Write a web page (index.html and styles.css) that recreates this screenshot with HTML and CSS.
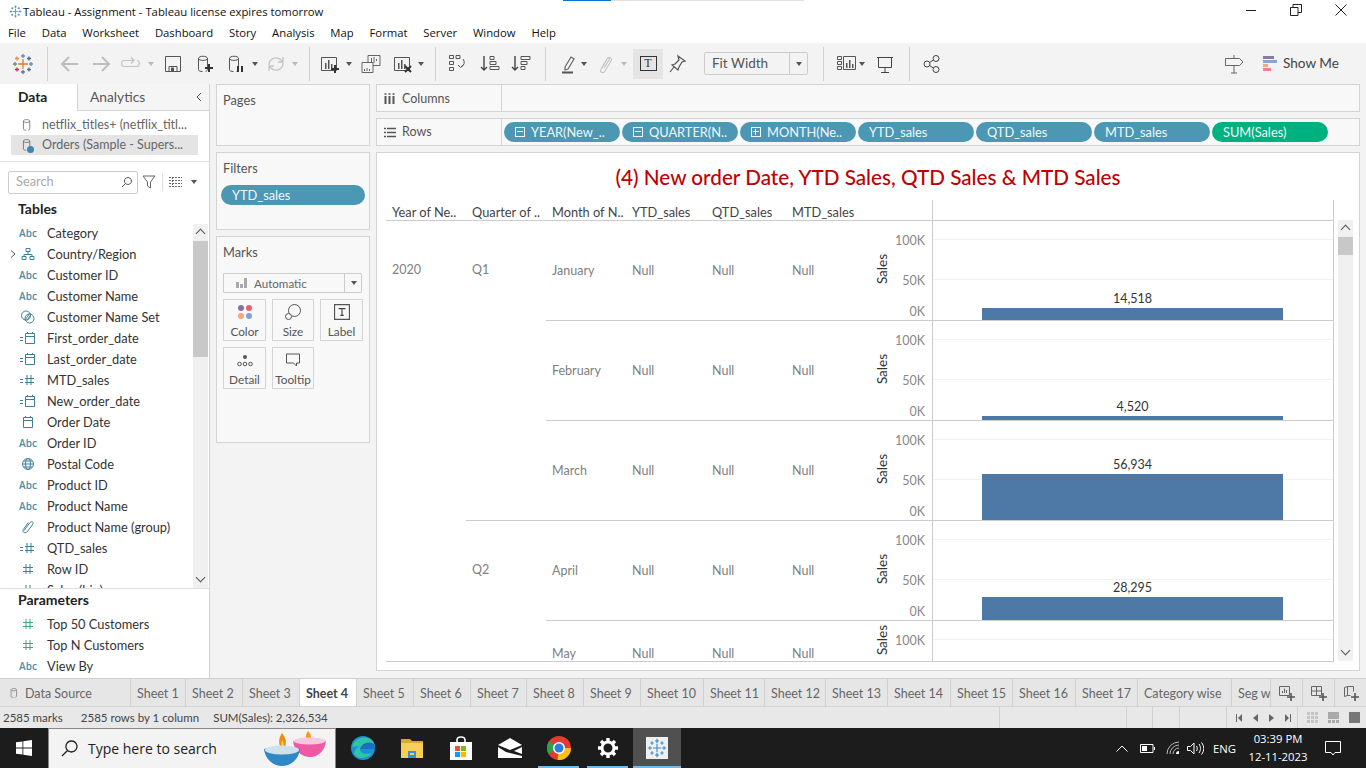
FILE: index.html
```html
<!DOCTYPE html>
<html lang="en">
<head>
<meta charset="utf-8">
<title>Tableau - Assignment</title>
<link rel="stylesheet" href="styles.css">
</head>
<body>
<svg class="defs" width="0" height="0" aria-hidden="true">
  <symbol id="flake" viewBox="0 0 24 24">
    <g fill="none" stroke="currentColor" stroke-width="1.4">
      <path d="M12 7v10M7 12h10"/>
      <path d="M12 1v5M9.800 3.500h4.400M12 18v5M9.800 20.500h4.400M1 12h5M3.500 9.800v4.400M18 12h5M20.500 9.800v4.400"/>
      <path d="M6 4v4M4 6h4M18 4v4M16 6h4M6 16v4M4 18h4M18 16v4M16 18h4"/>
    </g>
  </symbol>
  <symbol id="i-cal" viewBox="0 0 20 16"><path d="M5.500 3.500h9v10h-9zM5.500 6.500h9M7.500 2v2M12.500 2v2" fill="none" stroke="currentColor"/></symbol>
  <symbol id="i-ccal" viewBox="0 0 20 16"><path d="M2 7.500h3M2 10.500h3M7.500 3.500h9v10h-9zM7.500 6.500h9M9.500 2v2M14.500 2v2" fill="none" stroke="currentColor"/></symbol>
  <symbol id="i-num" viewBox="0 0 20 16"><path d="M8 3v10M12 3v10M5 6.500h10M5 10.500h10" fill="none" stroke="currentColor"/></symbol>
  <symbol id="i-cnum" viewBox="0 0 20 16"><path d="M2 7.500h3M2 10.500h3M9 3v10M13 3v10M7 6.500h9M7 10.500h9" fill="none" stroke="currentColor"/></symbol>
  <symbol id="i-geo" viewBox="0 0 20 16"><g fill="none" stroke="currentColor"><circle cx="10" cy="8" r="5.500"/><ellipse cx="10" cy="8" rx="2.500" ry="5.500"/><path d="M4.500 8h11M5.500 5h9M5.500 11h9"/></g></symbol>
  <symbol id="i-hier" viewBox="0 0 20 16"><path d="M8 2.500h4v3h-4zM4 10.500h4v3h-4zM12 10.500h4v3h-4zM10 5.500v3M6 10.500v-2h8v2" fill="none" stroke="currentColor"/></symbol>
  <symbol id="i-set" viewBox="0 0 20 16"><g fill="none" stroke="currentColor"><circle cx="8" cy="6.500" r="4.500"/><circle cx="11.500" cy="9.500" r="4.500"/><path d="M7 11l5-7M9 11.500l4-6"/></g></symbol>
  <symbol id="i-clip" viewBox="0 0 20 16"><path d="M6 11.500l6-8c1.500-1.800 4-.3 2.800 1.700l-5.500 7.500c-2 2.300-5.500.5-4-2.200l5-7" fill="none" stroke="currentColor"/></symbol>
  <symbol id="i-cyl" viewBox="0 0 20 20"><path d="M3.500 4.500c0-3 9-3 9 0v11c0 1-1 1.500-2 1.800M3.500 4.500c0 2.500 9 2.500 9 0M3.500 4.500v11c0 1.500 2 2 4 2" fill="none" stroke="currentColor"/></symbol>
  <symbol id="i-bars" viewBox="0 0 20 20"><path d="M1.500 3.500h15v13h-15z" fill="none" stroke="currentColor"/><path d="M5 9h1.500v6H5zM8 6h1.500v9H8zM11 10h1.500v5H11z" fill="currentColor"/></symbol>
</svg>

<header class="titlebar">
  <svg class="title-logo"><use href="#flake"/></svg>
  <span class="title-text">Tableau - Assignment - Tableau license expires tomorrow</span>
  <div class="progress"><span class="progress-on"></span><span class="progress-off"></span></div>
  <div class="winctl">
    <svg width="12" height="12" viewBox="0 0 12 12"><path d="M1 6.500h10" stroke="#222"/></svg>
    <svg width="12" height="12" viewBox="0 0 12 12"><path d="M.5 3.500h7.500v8H.5zM3 3.500V.5h8.500v8H8" fill="none" stroke="#222"/></svg>
    <svg width="12" height="12" viewBox="0 0 12 12"><path d="M.5.500l11 11M11.500.500l-11 11" stroke="#222"/></svg>
  </div>
</header>

<nav class="menubar">
  <span>File</span><span>Data</span><span>Worksheet</span><span>Dashboard</span><span>Story</span><span>Analysis</span><span>Map</span><span>Format</span><span>Server</span><span>Window</span><span>Help</span>
</nav>

<div class="toolbar">
  <svg class="ti" viewBox="0 0 20 20"><g fill="none" stroke-width="1.300"><path d="M10 5v10M5 10h10" stroke="#e8762c"/><path d="M10 0v4M8 2h4" stroke="#5a8fbf"/><path d="M10 16v4M8 18h4" stroke="#4e79a7"/><path d="M0 10h4M2 8v4" stroke="#59a14f"/><path d="M16 10h4M18 8v4" stroke="#5a8fbf"/><path d="M4 2.500v4M2 4.500h4" stroke="#f28e2b"/><path d="M16 2.500v4M14 4.500h4" stroke="#4e5f8c"/><path d="M4 13.500v4M2 15.500h4" stroke="#c8304a"/><path d="M16 13.500v4M14 15.500h4" stroke="#5b6c9a"/></g></svg>
  <span class="tsep"></span>
  <svg class="ti" viewBox="0 0 20 20"><path d="M18 10H3M9 3l-7 7 7 7" fill="none" stroke="#bdbdbd" stroke-width="2"/></svg>
  <svg class="ti" viewBox="0 0 20 20"><path d="M2 10h15M11 3l7 7-7 7" fill="none" stroke="#bdbdbd" stroke-width="2"/></svg>
  <svg class="ti" viewBox="0 0 20 20"><path d="M12 6.500H3c-3 0-3 6 0 6h13c3 0 3-6 0-6M10 3.500l3 3-3 3" fill="none" stroke="#c4c4c4" stroke-width="1.200"/></svg>
  <span class="caret caret-off"></span>
  <svg class="ti" viewBox="0 0 20 20"><path d="M2.500 2.500h15v15h-15zM6 17.500v-5h8v5" fill="none" stroke="#555"/><path d="M8 13.500h3v4H8z" fill="#555"/></svg>
  <svg class="ti tink" viewBox="0 0 20 20"><use href="#i-cyl"/><path d="M14 10v8M10 14h8" stroke="#333" stroke-width="2"/></svg>
  <svg class="ti tink" viewBox="0 0 20 20"><use href="#i-cyl"/><path d="M12 12v6M16 12v6" stroke="#333" stroke-width="2"/></svg>
  <span class="caret"></span>
  <svg class="ti" viewBox="0 0 20 20"><path d="M3 11a7 7 0 0 1 12-5l2 2M17 9a7 7 0 0 1-12 5l-2-2M17 3v5h-5M3 17v-5h5" fill="none" stroke="#c4c4c4" stroke-width="1.300"/></svg>
  <span class="caret caret-off"></span>
  <span class="tsep"></span>
  <svg class="ti tink" viewBox="0 0 20 20"><use href="#i-bars"/><path d="M15 11v8M11 15h8" stroke="#333" stroke-width="2"/></svg>
  <span class="caret"></span>
  <svg class="ti" viewBox="0 0 20 20"><path d="M7 10V1.500h12v10h-7" fill="none" stroke="#666"/><path d="M1 8.500h11v10H1z" fill="#f3f3f3" stroke="#666"/><path d="M10.500 8V4M13 9V3M15.500 7V5M3.500 17v-2M6 17v-3M8.500 17v-2" stroke="#666"/></svg>
  <svg class="ti tink" viewBox="0 0 20 20"><use href="#i-bars"/><path d="M12 12l6 6M18 12l-6 6" stroke="#333" stroke-width="2"/></svg>
  <span class="caret"></span>
  <span class="tsep"></span>
  <svg class="ti" viewBox="0 0 20 20"><path d="M1.500 1.500h4v3h-4zM8 1.500h4v3H8zM1.500 7.500h4v3h-4zM1.500 13.500h4v3h-4zM15 5a5 5 0 0 1-2 8M10 11l2.500 2.500L15 11" fill="none" stroke="#555"/></svg>
  <svg class="ti" viewBox="0 0 20 20"><path d="M4 2v14M1 13l3 3 3-3" fill="none" stroke="#444" stroke-width="1.400"/><path d="M10 2.500h4v3h-4zM10 7.500h6v3h-6zM10 12.500h9v3h-9z" fill="none" stroke="#555"/></svg>
  <svg class="ti" viewBox="0 0 20 20"><path d="M4 2v14M1 13l3 3 3-3" fill="none" stroke="#444" stroke-width="1.400"/><path d="M10 2.500h9v3h-9zM10 7.500h6v3h-6zM10 12.500h4v3h-4z" fill="none" stroke="#555"/></svg>
  <span class="tsep"></span>
  <svg class="ti" viewBox="0 0 20 20"><path d="M7 13l6-10 3 2-6 10-3 1zM4 18.500h11" fill="none" stroke="#666" stroke-width="1.200"/><path d="M4 18.500h11" stroke="#555" stroke-width="2"/></svg>
  <span class="caret"></span>
  <svg class="ti" viewBox="0 0 20 20"><path d="M7 14l5-9c1.500-3 6-1 4 2l-6 10c-2 3-6 1-4-2l6-10c1-2 3-1 2 1l-5 8" fill="none" stroke="#c4c4c4" stroke-width="1.200"/></svg>
  <span class="caret caret-off"></span>
  <span class="tbtn-on"><span class="tbox">T</span></span>
  <svg class="ti" viewBox="0 0 20 20"><path d="M11 2l7 5-3 1-3 5-1 3-6-5 3-1 4-4zM7 13l-4 5" fill="none" stroke="#555" stroke-width="1.200"/></svg>
  <div class="fitbox"><span class="fit-label">Fit Width</span><span class="fit-arrow"><span class="caret"></span></span></div>
  <span class="tsep"></span>
  <svg class="ti" viewBox="0 0 20 20"><path d="M1.500 2.500h4v3h-4zM1.500 7.500h4v3h-4zM1.500 12.500h4v3h-4zM7.500 2.500h12v13h-12z" fill="none" stroke="#555"/><path d="M10 9h1.500v5H10zM13 6h1.500v8H13zM16 10h1.500v4H16z" fill="#555"/></svg>
  <span class="caret"></span>
  <svg class="ti" viewBox="0 0 20 20"><path d="M2 3.500h16M3.500 3.500v10h13v-10M10 13.500v5M6 18.500h8" fill="none" stroke="#444"/></svg>
  <span class="tsep"></span>
  <svg class="ti" viewBox="0 0 20 20"><g fill="none" stroke="#444"><circle cx="14" cy="4.500" r="3"/><circle cx="5" cy="10" r="3"/><circle cx="14" cy="15.500" r="3"/><path d="M7.500 8.500l4-2.500M7.500 11.500l4 2.500"/></g></svg>
  <svg class="ti ti-sign" viewBox="0 0 20 20"><path d="M1.500 4.500h14l3.500 3.500-3.500 3.500h-14zM10 4.500V1M10 11.500V19M7 19h6" fill="none" stroke="#666"/></svg>
  <div class="showme">
    <span class="sm-bars"><i class="sm1"></i><i class="sm2"></i><i class="sm3"></i><i class="sm4"></i></span>
    <span class="sm-text">Show Me</span>
  </div>
</div>

<main class="workspace">
  <aside class="datapane">
    <div class="dtabs">
      <div class="dtab dtab-on"><span>Data</span></div>
      <div class="dtab dtab-off"><span>Analytics</span><svg class="collapse" width="8" height="10" viewBox="0 0 8 10"><path d="M6 1L2 5l4 4" fill="none" stroke="#555"/></svg></div>
    </div>
    <div class="conns">
      <div class="conn"><svg class="conn-i"><use href="#i-cyl"/></svg><span class="conn-t">netflix_titles+ (netflix_titl...</span></div>
      <div class="conn conn-on"><span class="conn-ic"><svg class="conn-i"><use href="#i-cyl"/></svg><i class="conn-check"></i></span><span class="conn-t">Orders (Sample - Supers...</span></div>
    </div>
    <div class="searchrow">
      <div class="search"><span class="search-t">Search</span><svg width="12" height="12" viewBox="0 0 12 12"><path d="M7 1.500a3.500 3.500 0 1 1-.1 0zM4.500 7.500L1 11" fill="none" stroke="#555"/></svg></div>
      <svg width="14" height="14" viewBox="0 0 14 14" class="funnel"><path d="M1 1h12L8.500 7v6l-3-2V7z" fill="none" stroke="#666"/></svg>
      <span class="sr-sep"></span>
      <svg width="13" height="10" viewBox="0 0 13 10"><path d="M0 .500h13M0 3.500h13M0 6.500h13M0 9.500h13M3.500 0v10" stroke="#666" stroke-dasharray="2 1"/></svg>
      <span class="caret sr-caret"></span>
    </div>
    <h2 class="ph">Tables</h2>
    <div class="fieldbox">
      <ul class="fields fields-main">
        <li><i class="chev"></i><span class="abc">Abc</span><span>Category</span></li>
        <li><svg class="chev-i" width="10" height="10" viewBox="0 0 10 10"><path d="M3 1.500L7 5 3 8.500" fill="none" stroke="#555"/></svg><svg class="fi"><use href="#i-hier"/></svg><span>Country/Region</span></li>
        <li><i class="chev"></i><span class="abc">Abc</span><span>Customer ID</span></li>
        <li><i class="chev"></i><span class="abc">Abc</span><span>Customer Name</span></li>
        <li><i class="chev"></i><svg class="fi"><use href="#i-set"/></svg><span>Customer Name Set</span></li>
        <li><i class="chev"></i><svg class="fi"><use href="#i-ccal"/></svg><span>First_order_date</span></li>
        <li><i class="chev"></i><svg class="fi"><use href="#i-ccal"/></svg><span>Last_order_date</span></li>
        <li><i class="chev"></i><svg class="fi"><use href="#i-cnum"/></svg><span>MTD_sales</span></li>
        <li><i class="chev"></i><svg class="fi"><use href="#i-ccal"/></svg><span>New_order_date</span></li>
        <li><i class="chev"></i><svg class="fi"><use href="#i-cal"/></svg><span>Order Date</span></li>
        <li><i class="chev"></i><span class="abc">Abc</span><span>Order ID</span></li>
        <li><i class="chev"></i><svg class="fi"><use href="#i-geo"/></svg><span>Postal Code</span></li>
        <li><i class="chev"></i><span class="abc">Abc</span><span>Product ID</span></li>
        <li><i class="chev"></i><span class="abc">Abc</span><span>Product Name</span></li>
        <li><i class="chev"></i><svg class="fi"><use href="#i-clip"/></svg><span>Product Name (group)</span></li>
        <li><i class="chev"></i><svg class="fi"><use href="#i-cnum"/></svg><span>QTD_sales</span></li>
        <li><i class="chev"></i><svg class="fi"><use href="#i-num"/></svg><span>Row ID</span></li>
        <li><i class="chev"></i><svg class="fi"><use href="#i-num"/></svg><span>Sales (bin)</span></li>
      </ul>
      <div class="lscroll">
        <span class="sb-up"></span><span class="lthumb"></span><span class="sb-fill"></span><span class="sb-down"></span>
      </div>
    </div>
    <h2 class="ph ph-params">Parameters</h2>
    <ul class="fields">
      <li><i class="chev"></i><svg class="fi fi-green"><use href="#i-num"/></svg><span>Top 50 Customers</span></li>
      <li><i class="chev"></i><svg class="fi fi-green"><use href="#i-num"/></svg><span>Top N Customers</span></li>
      <li><i class="chev"></i><span class="abc">Abc</span><span>View By</span></li>
    </ul>
  </aside>

  <section class="cards">
    <div class="card card-pages"><div class="card-h">Pages</div></div>
    <div class="card card-filters">
      <div class="card-h">Filters</div>
      <div class="pill pill-filter"><span>YTD_sales</span></div>
    </div>
    <div class="card card-marks">
      <div class="card-h">Marks</div>
      <div class="markdd">
        <span class="md-l"><svg width="11" height="10" viewBox="0 0 11 10"><path d="M0 4h3v6H0zM4 6h3v4H4zM8 0h3v10H8z" fill="#aaa"/></svg>Automatic</span>
        <span class="md-a"><span class="caret"></span></span>
      </div>
      <div class="markgrid">
        <div class="mbtn">
          <svg width="16" height="16" viewBox="0 0 16 16"><circle cx="4" cy="4" r="3" fill="#8a70a0"/><circle cx="12" cy="4" r="3" fill="#f0596e"/><circle cx="4" cy="12" r="3" fill="#f3a77b"/><circle cx="12" cy="12" r="3" fill="#7fa3d1"/></svg>
          <span>Color</span>
        </div>
        <div class="mbtn">
          <svg width="16" height="16" viewBox="0 0 16 16"><circle cx="9.500" cy="6.500" r="6" fill="none" stroke="#555"/><circle cx="3.500" cy="12.500" r="3" fill="#f8f8f8" stroke="#555"/></svg>
          <span>Size</span>
        </div>
        <div class="mbtn">
          <svg width="16" height="16" viewBox="0 0 14 14"><path d="M.5.500h13v13H.500z" fill="none" stroke="#555"/><path d="M4 4h6M7 4v6M5.500 10h3" stroke="#444"/></svg>
          <span>Label</span>
        </div>
        <div class="mbtn">
          <svg width="16" height="16" viewBox="0 0 16 16"><circle cx="8" cy="5" r="2" fill="#555"/><g fill="none" stroke="#555"><circle cx="2.500" cy="12" r="1.800"/><circle cx="8" cy="12" r="1.800"/><circle cx="13.500" cy="12" r="1.800"/></g></svg>
          <span>Detail</span>
        </div>
        <div class="mbtn">
          <svg width="16" height="16" viewBox="0 0 16 16"><path d="M1.500 2h13v9h-3v3l-3-3h-7z" fill="none" stroke="#555"/></svg>
          <span>Tooltip</span>
        </div>
      </div>
    </div>
  </section>

  <section class="stage">
    <div class="shelf">
      <div class="shelf-l"><svg width="11" height="11" viewBox="0 0 11 11"><path d="M1.500 3v8M5.500 3v8M9.500 3v8" stroke="#555" stroke-width="2"/><path d="M.5 1h2M4.500 1h2M8.500 1h2" stroke="#555" stroke-width="1.500"/></svg><span>Columns</span></div>
      <div class="shelf-b"></div>
    </div>
    <div class="shelf">
      <div class="shelf-l"><svg width="12" height="11" viewBox="0 0 12 11"><path d="M0 1.500h2M3 1.500h9M0 5.500h2M3 5.500h9M0 9.500h2M3 9.500h9" stroke="#555" stroke-width="1.500"/></svg><span class="rows-t">Rows</span></div>
      <div class="shelf-b shelf-pills">
        <div class="pill"><span class="pm pm-minus"></span><span>YEAR(New_..</span></div>
        <div class="pill"><span class="pm pm-minus"></span><span>QUARTER(N..</span></div>
        <div class="pill"><span class="pm pm-plus"></span><span>MONTH(Ne..</span></div>
        <div class="pill"><span>YTD_sales</span></div>
        <div class="pill"><span>QTD_sales</span></div>
        <div class="pill"><span>MTD_sales</span></div>
        <div class="pill pill-green"><span>SUM(Sales)</span></div>
      </div>
    </div>

    <div class="viz">
      <h1 class="viz-title">(4) New order Date, YTD Sales, QTD Sales &amp; MTD Sales</h1>
      <div class="viz-main">
        <div class="crosstab">
          <div class="xhead">
            <span class="xc">Year of Ne..</span><span class="xc">Quarter of ..</span><span class="xc">Month of N..</span><span class="xc">YTD_sales</span><span class="xc">QTD_sales</span><span class="xc">MTD_sales</span><span class="xaxis"></span><span class="xpane"></span>
          </div>
          <div class="xbody">
            <div class="xv xv-year">2020</div>
            <div class="quarters">
              <div class="quarter">
                <div class="xv">Q1</div>
                <div class="months">
                  <div class="month">
                    <div class="xm">January</div><div class="xm">Null</div><div class="xm">Null</div><div class="xm">Null</div>
                    <div class="axis"><span class="sales">Sales</span><div class="ticks"><span class="t100">100K</span><span class="t50">50K</span><span class="t0">0K</span></div></div>
                    <div class="pane"><span class="bar-l">14,518</span><div class="bar" style="height:12px"></div></div>
                  </div>
                  <div class="month">
                    <div class="xm">February</div><div class="xm">Null</div><div class="xm">Null</div><div class="xm">Null</div>
                    <div class="axis"><span class="sales">Sales</span><div class="ticks"><span class="t100">100K</span><span class="t50">50K</span><span class="t0">0K</span></div></div>
                    <div class="pane"><span class="bar-l">4,520</span><div class="bar" style="height:4px"></div></div>
                  </div>
                  <div class="month">
                    <div class="xm">March</div><div class="xm">Null</div><div class="xm">Null</div><div class="xm">Null</div>
                    <div class="axis"><span class="sales">Sales</span><div class="ticks"><span class="t100">100K</span><span class="t50">50K</span><span class="t0">0K</span></div></div>
                    <div class="pane"><span class="bar-l">56,934</span><div class="bar" style="height:46px"></div></div>
                  </div>
                </div>
              </div>
              <div class="quarter">
                <div class="xv">Q2</div>
                <div class="months">
                  <div class="month">
                    <div class="xm">April</div><div class="xm">Null</div><div class="xm">Null</div><div class="xm">Null</div>
                    <div class="axis"><span class="sales">Sales</span><div class="ticks"><span class="t100">100K</span><span class="t50">50K</span><span class="t0">0K</span></div></div>
                    <div class="pane"><span class="bar-l">28,295</span><div class="bar" style="height:23px"></div></div>
                  </div>
                  <div class="month month-cut">
                    <div class="xm">May</div><div class="xm">Null</div><div class="xm">Null</div><div class="xm">Null</div>
                    <div class="axis"><span class="sales">Sales</span><div class="ticks"><span class="t100">100K</span></div></div>
                    <div class="pane"></div>
                  </div>
                </div>
              </div>
            </div>
          </div>
        </div>
        <div class="vscroll">
          <span class="sb-up"></span><span class="vthumb"></span><span class="sb-fill"></span><span class="sb-down"></span>
        </div>
      </div>
    </div>
  </section>
</main>

<div class="tabstrip">
  <div class="tabs">
    <div class="tab tab-ds"><svg width="12" height="14" viewBox="0 0 20 20"><use href="#i-cyl"/></svg>Data Source</div>
    <div class="tab">Sheet 1</div><div class="tab">Sheet 2</div><div class="tab">Sheet 3</div><div class="tab tab-on">Sheet 4</div><div class="tab">Sheet 5</div><div class="tab">Sheet 6</div><div class="tab">Sheet 7</div><div class="tab">Sheet 8</div><div class="tab">Sheet 9</div><div class="tab">Sheet 10</div><div class="tab">Sheet 11</div><div class="tab">Sheet 12</div><div class="tab">Sheet 13</div><div class="tab">Sheet 14</div><div class="tab">Sheet 15</div><div class="tab">Sheet 16</div><div class="tab">Sheet 17</div><div class="tab">Category wise</div><div class="tab tab-last">Seg wise</div>
  </div>
  <div class="newtabs">
    <div class="newtab"><svg width="16" height="16" viewBox="0 0 16 16"><path d="M.5 1.500h10v9H.5z" fill="none" stroke="#666"/><path d="M3.500 8V6M5.500 8V3.500M7.500 8V5" stroke="#666"/><path d="M12 8v8M8 12h8" stroke="#555" stroke-width="1.600"/></svg></div>
    <div class="newtab"><svg width="16" height="16" viewBox="0 0 16 16"><path d="M.5 1.500h10v9H.5zM.5 6h10M5.500 1.500V10.500" fill="none" stroke="#666"/><path d="M12 8v8M8 12h8" stroke="#555" stroke-width="1.600"/></svg></div>
    <div class="newtab"><svg width="16" height="16" viewBox="0 0 16 16"><path d="M1.500 2.500l3-1v9l-3 1zM4.500 1.500h6v5M4.500 10.500h3" fill="none" stroke="#666"/><path d="M12 8v8M8 12h8" stroke="#555" stroke-width="1.600"/></svg></div>
  </div>
</div>

<footer class="status">
  <div class="st st-main"><span>2585 marks</span><span>2585 rows by 1 column</span><span class="st-sum">SUM(Sales): 2,326,534</span></div>
  <div class="st st-a"></div><div class="st st-b"></div><div class="st st-b st-c"></div>
  <div class="st st-d"></div>
  <div class="st st-nav">
    <svg width="6" height="8" viewBox="0 0 6 8"><path d="M.5 0v8" stroke="#666"/><path d="M6 0v8L2 4z" fill="#666"/></svg>
    <svg width="5" height="8" viewBox="0 0 5 8"><path d="M5 0v8L0 4z" fill="#666"/></svg>
    <svg width="5" height="8" viewBox="0 0 5 8"><path d="M0 0v8l5-4z" fill="#666"/></svg>
    <svg width="6" height="8" viewBox="0 0 6 8"><path d="M5.500 0v8" stroke="#666"/><path d="M0 0v8l4-4z" fill="#666"/></svg>
  </div>
  <div class="st-view">
    <svg width="11" height="11" viewBox="0 0 11 11"><path d="M0 1.500h11M0 5.500h11M0 9.500h11" stroke="#c4c4c4" stroke-width="3" stroke-dasharray="3 1"/></svg>
    <svg width="11" height="11" viewBox="0 0 11 11"><path d="M0 0h11v7H0z" fill="#aaa"/><path d="M0 9.500h11" stroke="#aaa" stroke-width="3" stroke-dasharray="3 1"/></svg>
    <svg width="11" height="11" viewBox="0 0 11 11"><path d="M0 0h11v11H0z" fill="#777"/></svg>
  </div>
</footer>

<div class="taskbar">
  <div class="start"><svg width="16" height="16" viewBox="0 0 16 16"><path d="M0 2.300l6.500-.9v6.100H0zM7.300 1.300L16 0v7.500H7.300zM0 8.400h6.500v6.200L0 13.700zM7.300 8.400H16V16l-8.700-1.200z" fill="#fff"/></svg></div>
  <div class="tsearch">
    <svg width="17" height="17" viewBox="0 0 17 17"><path d="M10.500 1a5.500 5.500 0 1 1-.1 0zM6.500 10.500L1 16" fill="none" stroke="#222" stroke-width="1.300"/></svg>
    <span class="ts-text">Type here to search</span>
    <svg class="diya" width="62" height="35" viewBox="0 0 62 35">
      <path d="M44 0c4 4 4 8 0 12c-3-4-3-8 0-12z" fill="#f59a23"/>
      <path d="M29 10c8-3 25-3 33 0c-1 10-8 16-16 16s-16-6-17-16z" fill="#ee5aa3"/>
      <ellipse cx="45.500" cy="10" rx="16" ry="3.500" fill="#f8c8de"/>
      <path d="M18 2c5 6 5 12 1 18c-5-6-5-12-1-18z" fill="#f08a1c"/>
      <path d="M18 9c2 3 2 6 1 10c-2-3-2-7-1-10z" fill="#fbd34d"/>
      <path d="M0 18c10-3 26-3 36 0c-1 10-9 17-18 17S1 28 0 18z" fill="#2f88c6"/>
      <ellipse cx="18" cy="19" rx="17" ry="4.500" fill="#cfe2ec"/>
    </svg>
  </div>
  <div class="tapps">
    <div class="tapp"><svg width="24" height="24" viewBox="0 0 24 24"><circle cx="12" cy="12" r="12" fill="#1b8fd8"/><path d="M1 11C3 3 12-1 19 3c4 2 5 6 5 10H9c0 4 5 6 12 4-5 6-14 7-18 1 1-4 2-7 7-8-4 0-7 1-9 1z" fill="#2ec4a6"/><path d="M9 13h15c0-2 0-3-1-5-4-3-12-2-14 5z" fill="#1c6fc0"/></svg></div>
    <div class="tapp"><svg width="22" height="20" viewBox="0 0 22 20"><path d="M0 1h9l2 2h11v3H0z" fill="#d9a92a"/><path d="M0 5h22v15H0z" fill="#f6cf57"/><path d="M7 13h8v7H7z" fill="#3b8fd6"/><path d="M9 15h4v2H9z" fill="#f6cf57"/></svg></div>
    <div class="tapp"><svg width="22" height="24" viewBox="0 0 22 24"><path d="M7 7V4c0-4 8-4 8 0v3" fill="none" stroke="#fff" stroke-width="1.600"/><path d="M0 6h22v18H0z" fill="#fff"/><path d="M5 10h5v5H5z" fill="#f25022"/><path d="M11 10h5v5h-5z" fill="#7fba00"/><path d="M5 16h5v5H5z" fill="#00a4ef"/><path d="M11 16h5v5h-5z" fill="#ffb900"/></svg></div>
    <div class="tapp"><svg width="24" height="20" viewBox="0 0 24 20"><path d="M0 7l12-7 12 7-12 5z" fill="#fff"/><path d="M0 9v11h24v-2L8 14z" fill="#fff"/><path d="M24 9v7l-8-3z" fill="#fff"/></svg></div>
    <div class="tapp tapp-run"><svg width="24" height="24" viewBox="0 0 24 24"><circle cx="12" cy="12" r="12" fill="#e33b2e"/><path d="M12 12L1.600 18A12 12 0 0 1 2 5.500z" fill="#2fa14c"/><path d="M12 12h12a12 12 0 0 1-13.500 11.900z" fill="#fbc116"/><circle cx="12" cy="12" r="6" fill="#fff"/><circle cx="12" cy="12" r="4.500" fill="#2a7de1"/></svg></div>
    <div class="tapp tapp-run"><svg width="20" height="20" viewBox="0 0 20 20"><circle cx="10" cy="10" r="6" fill="none" stroke="#fff" stroke-width="3"/><path d="M10 0v4M10 16v4M0 10h4M16 10h4M3 3l3 3M14 14l3 3M17 3l-3 3M6 14l-3 3" stroke="#fff" stroke-width="3.400"/></svg></div>
    <div class="tapp tapp-active"><span class="tb-tile"><svg width="20" height="20"><use href="#flake"/></svg></span></div>
  </div>
  <div class="tray">
    <svg class="tr-up" width="12" height="7" viewBox="0 0 12 7"><path d="M.5 6.500L6 1l5.500 5.500" fill="none" stroke="#fff"/></svg>
    <svg class="tr-bat" width="15" height="9" viewBox="0 0 15 9"><path d="M.5.500h12.500v8H.500z" fill="none" stroke="#fff"/><path d="M2 2h5v5H2zM14 3h1v3h-1z" fill="#fff"/></svg>
    <svg class="tr-wifi" width="14" height="14" viewBox="0 0 14 14"><path d="M1 13a12 12 0 0 1 12-12M4 13a9 9 0 0 1 9-9M7 13a6 6 0 0 1 6-6" fill="none" stroke="#bbb"/><path d="M10 13a3 3 0 0 1 3-3v3z" fill="#fff"/></svg>
    <svg class="tr-vol" width="17" height="13" viewBox="0 0 17 13"><path d="M.5 4.500h3L7 1v11L3.500 8.500h-3zM9.500 4c1 1.500 1 3.500 0 5M12 2c2 3 2 6 0 9M14.500.500c3 4 3 8 0 12" fill="none" stroke="#fff"/></svg>
    <span class="tr-eng">ENG</span>
    <div class="clock"><span>03:39 PM</span><span>12-11-2023</span></div>
    <svg class="tr-note" width="16" height="15" viewBox="0 0 16 15"><path d="M.5.500h15v11H10l-2 2.500-2-2.500H.5z" fill="none" stroke="#fff"/></svg>
  </div>
</div>
</body>
</html>
```

FILE: styles.css
```css
* { box-sizing: border-box; }
html, body { margin: 0; padding: 0; }
body {
  width: 1366px;
  height: 768px;
  overflow: hidden;
  display: flex;
  flex-direction: column;
  background: #fff;
  font-family: "Lato", "Noto Sans", sans-serif;
  font-size: 12.800px;
  color: #333;
}
.defs { position: absolute; }
ul { list-style: none; margin: 0; padding: 0; }
h1, h2 { margin: 0; }

/* title + menu */
.titlebar {
  height: 22px;
  display: flex;
  align-items: center;
  padding-left: 9px;
  font-family: "Open Sans", "Noto Sans", sans-serif;
  font-size: 11.300px;
  color: #111;
  position: relative;
  flex: none;
}
.title-logo { width: 13px; height: 13px; color: #3c86b8; margin-right: 1px; flex: none; }
.progress { position: absolute; left: 563px; top: 0; display: flex; height: 1px; }
.progress-on { width: 48px; background: #0078d7; }
.progress-off { width: 193px; background: #e0e0e0; }
.winctl { margin-left: auto; display: flex; gap: 33px; padding-right: 19px; margin-top: -3px; }
.menubar {
  height: 21px;
  flex: none;
  display: flex;
  align-items: center;
  gap: 15.800px;
  padding-left: 8px;
  font-family: "Open Sans", "Noto Sans", sans-serif;
  font-size: 11.300px;
  color: #111;
}

/* toolbar */
.toolbar {
  height: 41px;
  flex: none;
  background: #f3f3f3;
  display: grid;
  grid-template-columns: 34px 13px 31px 30px 26px 16px 32px 31px 25px 15px 25px 18px 11px 25px 16px 32px 24px 18px 13px 32px 31px 34px 13px 22px 15px 25px 13px 34px 37px 119px 13px 22px 17px 34px 13px 1fr 39px 74px;
  align-items: center;
  justify-items: start;
  padding: 0 29px 0 13px;
}
.ti { width: 20px; height: 20px; }
.tink { color: #555; }
.tsep { width: 1px; height: 34px; background: #d0d0d0; }
.caret {
  display: inline-block;
  width: 0;
  height: 0;
  border-left: 3.500px solid transparent;
  border-right: 3.500px solid transparent;
  border-top: 4px solid #555;
  margin-left: 1px;
}
.caret-off { border-top-color: #bbb; }
.tbtn-on {
  width: 30px;
  height: 30px;
  background: #e4e4e4;
  display: flex;
  align-items: center;
  justify-content: center;
}
.tbox {
  width: 17px;
  height: 15px;
  border: 1px solid #333;
  font-size: 12px;
  line-height: 13px;
  text-align: center;
  font-family: "Liberation Serif", serif;
}
.fitbox {
  width: 104px;
  height: 23px;
  border: 1px solid #ccc;
  border-radius: 2px;
  display: flex;
  align-items: center;
  color: #555;
  font-size: 13.500px;
}
.fit-label { flex: 1; padding: 0 0 2px 7px; }
.fit-arrow { width: 18px; height: 100%; border-left: 1px solid #ccc; display: flex; align-items: center; justify-content: center; }
.showme { display: flex; align-items: center; gap: 6px; font-size: 13.600px; color: #444; white-space: nowrap; }
.sm-text { padding-bottom: 2px; }
.sm-bars { display: flex; flex-direction: column; gap: 1px; width: 14px; }
.sm-bars i { display: block; height: 3px; }
.sm1 { width: 11px; background: #8a7ca0; }
.sm2 { width: 14px; background: #85a6cf; }
.sm3 { width: 5px; background: #f3a87c; }
.sm4 { width: 8px; background: #f27f8a; }

/* workspace */
.workspace {
  height: 594px;
  flex: none;
  display: flex;
  background: #f3f3f3;
}
.datapane {
  width: 210px;
  flex: none;
  background: #fff;
  border-right: 1px solid #d4d4d4;
  display: flex;
  flex-direction: column;
}
.dtabs { display: flex; height: 27px; flex: none; }
.dtab { display: flex; align-items: center; font-size: 13.800px; }
.dtab span { padding-bottom: 2px; }
.dtab-on { width: 77px; font-weight: 700; padding-left: 18px; color: #222; }
.dtab-off {
  flex: 1;
  padding-left: 12px;
  background: #f5f5f5;
  border-left: 1px solid #d4d4d4;
  border-bottom: 1px solid #d4d4d4;
  color: #555;
  justify-content: space-between;
  padding-right: 6px;
}
.conns { height: 51px; padding: 4px 11px 0; border-bottom: 1px solid #e4e4e4; flex: none; }
.conn { height: 20px; display: flex; align-items: center; color: #666; width: 187px; padding-left: 10px; white-space: nowrap; font-size: 12.500px; }
.conn-on { background: #e4e4e4; }
.conn-i { width: 14px; height: 16px; color: #555; flex: none; }
.conn-ic { position: relative; display: flex; flex: none; }
.conn-check { position: absolute; right: 1px; bottom: 0; width: 7px; height: 7px; border-radius: 50%; background: #3f86b0; }
.conn-t { margin-left: 7px; padding-bottom: 1px; }
.searchrow { height: 32px; flex: none; display: flex; align-items: center; padding: 8px 0 0 8px; }
.search {
  width: 130px;
  height: 23px;
  border: 1px solid #ccc;
  border-radius: 2px;
  display: flex;
  align-items: center;
  justify-content: space-between;
  padding: 0 4px 0 7px;
  color: #aaa;
}
.search-t { padding-bottom: 2px; }
.funnel { margin-left: 4px; }
.sr-sep { width: 1px; height: 18px; background: #ddd; margin: 0 6px; }
.sr-caret { margin-left: 9px; }
.ph { font-size: 14px; font-weight: 700; color: #222; padding-left: 18px; height: 29px; line-height: 30px; flex: none; }
.ph-params { height: 25px; line-height: 22px; border-top: 1px solid #e0e0e0; }
.fieldbox { height: 365px; flex: none; overflow: hidden; display: flex; position: relative; }
.fields { flex: 1; }
.fields-main { margin-top: -1px; }
.fields li {
  height: 21px;
  display: flex;
  align-items: center;
  padding-left: 8px;
  white-space: nowrap;
}
.chev, .chev-i { width: 10px; flex: none; display: block; }
.abc {
  width: 20px;
  margin-right: 9px;
  text-align: center;
  font-family: "Open Sans", sans-serif;
  font-size: 10px;
  font-weight: 600;
  color: #4f8ba3;
  flex: none;
}
.fi { width: 20px; height: 16px; margin-right: 9px; color: #3f8096; flex: none; }
.fi-green { color: #44a583; }
.lscroll, .vscroll { width: 15px; flex: none; background: #f0f0f0; display: flex; flex-direction: column; }
.lscroll { margin: 1px 1px 0 0; }
.sb-up, .sb-down { height: 17px; flex: none; position: relative; }
.sb-up::after, .sb-down::after {
  content: "";
  position: absolute;
  left: 4px;
  width: 6px;
  height: 6px;
  border-left: 1.500px solid #555;
  border-top: 1.500px solid #555;
  transform: rotate(45deg);
  top: 6px;
}
.sb-down::after { transform: rotate(225deg); top: 3px; }
.sb-fill { flex: 1; }
.lthumb { height: 116px; background: #c8c8c8; flex: none; }
.vthumb { height: 18px; background: #c8c8c8; flex: none; }

/* cards */
.cards { width: 166px; flex: none; padding: 0 6px; display: flex; flex-direction: column; gap: 6px; }
.card { border: 1px solid #d4d4d4; background: #f8f8f8; padding: 0 6px; flex: none; }
.card-pages { height: 62px; }
.card-filters { height: 78px; padding: 0 4px; }
.card-marks { height: 207px; }
.card-h { color: #555; height: 30px; padding-top: 7px; line-height: 16px; }
.card-filters .card-h { padding-left: 2px; }
.card-marks .card-h { height: 36px; }
.pill {
  height: 20px;
  width: 116px;
  border-radius: 10px;
  background: #4c97b4;
  color: #f0f7fa;
  display: flex;
  align-items: center;
  padding-left: 11px;
  white-space: nowrap;
  flex: none;
}
.pill span:not(.pm) { padding-bottom: 1px; }
.pill-filter { width: 144px; margin-top: 2px; }
.pill-green { background: #00b180; }
.pm {
  width: 10px;
  height: 10px;
  border: 1px solid #f0f7fa;
  margin: 0 6px 0 0;
  position: relative;
  flex: none;
}
.pm::before { content: ""; position: absolute; left: 1px; right: 1px; top: 3px; height: 1px; background: #f0f7fa; }
.pm-plus::after { content: ""; position: absolute; top: 1px; bottom: 1px; left: 3px; width: 1px; background: #f0f7fa; }
.markdd { height: 20px; width: 139px; border: 1px solid #ccc; border-radius: 1px; display: flex; align-items: center; color: #666; font-size: 11.600px; }
.md-l { flex: 1; display: flex; align-items: center; gap: 7px; padding-left: 12px; }
.md-a { width: 17px; height: 100%; border-left: 1px solid #ccc; display: flex; align-items: center; justify-content: center; }
.markgrid { display: grid; grid-template-columns: 43px 42px 43px; column-gap: 6px; row-gap: 6px; margin-top: 6px; width: 140px; }
.mbtn { height: 42px; border: 1px solid #d4d4d4; display: flex; flex-direction: column; align-items: center; padding-top: 4px; gap: 4px; color: #555; font-size: 11.800px; line-height: 15px; white-space: nowrap; }

/* stage */
.stage { flex: 1; padding-right: 6px; display: flex; flex-direction: column; }
.shelf { height: 28px; flex: none; border: 1px solid #d4d4d4; background: #f8f8f8; display: flex; margin-bottom: 6px; }
.shelf-l { width: 125px; flex: none; border-right: 1px solid #d4d4d4; display: flex; align-items: center; gap: 7px; padding-left: 7px; color: #555; font-size: 12.500px; }
.rows-t { padding-bottom: 1px; margin-left: -1px; }
.shelf-b { flex: 1; }
.shelf-pills { display: flex; align-items: center; gap: 2px; padding-left: 2px; }
.viz { height: 519px; flex: none; border: 1px solid #d4d4d4; background: #fff; display: flex; flex-direction: column; }
.viz-title { height: 47px; font-size: 20.700px; font-weight: 500; color: #c00000; text-align: center; line-height: 48px; flex: none; }
.viz-main { display: flex; padding-left: 9px; height: 462px; flex: none; }
.crosstab { width: 948px; flex: none; display: flex; flex-direction: column; height: 462px; }
.xhead { display: flex; height: 21px; flex: none; border-bottom: 1px solid #ccc; color: #444; }
.xc { width: 80px; padding: 4px 0 0 6px; white-space: nowrap; line-height: 16px; }
.xaxis { width: 66px; }
.xpane { width: 402px; border-left: 1px solid #ccc; border-right: 1px solid #ccc; }
.xbody { display: flex; height: 441px; flex: none; overflow: hidden; border-bottom: 1px solid #ccc; }
.xv { width: 80px; flex: none; padding: 40px 0 0 6px; line-height: 18px; color: #808080; font-size: 12.500px; }
.quarters { flex: 1; display: flex; flex-direction: column; }
.quarter { display: flex; flex: none; }
.quarter:first-child { border-bottom: 1px solid #ccc; }
.months { flex: 1; display: flex; flex-direction: column; }
.month { height: 100px; display: flex; flex: none; border-bottom: 1px solid #ccc; }
.quarter:first-child .month:last-child { height: 99px; border-bottom: 0; }
.month-cut { height: 40px; border-bottom: 0; }
.xm { width: 80px; flex: none; padding: 41px 0 0 6px; line-height: 18px; color: #808080; font-size: 12.500px; }
.month-cut .xm { padding-top: 24px; }
.axis { width: 66px; flex: none; display: flex; font-size: 12.500px; }
.sales {
  writing-mode: vertical-rl;
  transform: rotate(180deg);
  width: 16px;
  margin: 0 0 2px 8px;
  text-align: center;
  align-self: center;
  color: #333;
  font-size: 13.500px;
  line-height: 16px;
}
.ticks { flex: 1; display: flex; flex-direction: column; align-items: flex-end; padding-right: 7px; color: #888; line-height: 18px; }
.t100 { margin-top: 11px; }
.t50 { margin-top: 22px; }
.t0 { margin-top: 13px; }
.pane {
  width: 402px;
  flex: none;
  border-left: 1px solid #ccc;
  border-right: 1px solid #ccc;
  padding: 0 50px 0 49px;
  display: flex;
  flex-direction: column;
  justify-content: flex-end;
  align-items: stretch;
  background-image: linear-gradient(#f0f0f0, #f0f0f0), linear-gradient(#f0f0f0, #f0f0f0);
  background-size: 100% 1px;
  background-repeat: no-repeat;
  background-position: 0 18px, 0 58px;
}
.bar { background: #4e79a7; flex: none; }
.bar-l { text-align: center; line-height: 17px; margin-bottom: 1px; font-size: 12.500px; color: #333; }
.vscroll { margin: 20px 0 0 4px; height: 441px; }

/* tabs */
.tabstrip { height: 29px; flex: none; display: flex; background: #e6e6e6; border-top: 1px solid #d0d0d0; border-bottom: 1px solid #d4d4d4; }
.tabs {
  width: 1270px;
  flex: none;
  display: grid;
  grid-template-columns: 131px 55px 57px 57px 57px 57px 57px 56px 57px 57px 63px 61px 61px 62px 63px 62px 63px 62px 94px 38px;
  overflow: hidden;
}
.tab { display: flex; align-items: center; padding-left: 6px; border-right: 1px solid #d0d0d0; color: #666; white-space: nowrap; font-size: 12.500px; overflow: hidden; min-width: 0; }
.tab-ds { padding-left: 9px; gap: 4px; }
.tab-on { background: #fff; font-weight: 700; color: #444; height: 28px; }
.tab-last { border-right: 0; }
.newtabs { flex: 1; display: flex; }
.newtab { width: 32px; display: flex; align-items: center; justify-content: center; border-left: 1px solid #d0d0d0; }

/* status */
.status { height: 21px; flex: none; background: #e8e8e8; display: flex; font-size: 11.500px; color: #444; }
.st { height: 100%; display: flex; align-items: center; flex: none; }
.st-main { width: 1000px; border-right: 1px solid #d0d0d0; padding-left: 3px; gap: 18px; }
.st-sum { margin-left: -4px; }
.st-a { width: 127px; border-right: 1px solid #d0d0d0; }
.st-b { width: 26px; border-right: 1px solid #d0d0d0; }
.st-c { width: 27px; }
.st-d { width: 47px; border-right: 1px solid #d0d0d0; }
.st-nav { width: 71px; border-right: 1px solid #d0d0d0; padding-left: 9px; gap: 11px; }
.st-view { flex: 1; display: flex; align-items: center; gap: 10px; padding-left: 9px; }

/* taskbar */
.taskbar { height: 40px; flex: none; background: #1c1c1c; display: flex; color: #fff; }
.start { width: 48px; display: flex; align-items: center; justify-content: center; flex: none; }
.tsearch { width: 288px; flex: none; background: #f3f3f3; border: 1px solid #888; border-bottom: 0; display: flex; align-items: center; padding-left: 12px; color: #222; font-family: "Open Sans", "Noto Sans", sans-serif; font-size: 14px; position: relative; }
.ts-text { margin-left: 10px; white-space: nowrap; }
.diya { position: absolute; right: 9px; top: 2px; }
.tapps { display: flex; padding-left: 2px; flex: none; }
.tapp { width: 49px; height: 40px; display: flex; align-items: center; justify-content: center; position: relative; flex: none; }
.tapp-run::after { content: ""; position: absolute; left: 4px; right: 4px; bottom: 0; height: 2px; background: #76b9ed; }
.tapp-active { width: 48px; background: #505050; margin-left: 1px; }
.tapp-active::after { content: ""; position: absolute; left: 0; right: 0; bottom: 0; height: 2px; background: #76b9ed; }
.tb-tile { width: 22px; height: 22px; background: #f0f0f0; color: #3f8fcf; display: flex; align-items: center; justify-content: center; }
.tray { flex: 1; display: flex; align-items: center; font-family: "Open Sans", "Noto Sans", sans-serif; font-size: 11.300px; white-space: nowrap; }
.tr-up { margin-left: 435px; flex: none; }
.tr-bat { margin-left: 12px; flex: none; }
.tr-wifi { margin-left: 11px; flex: none; }
.tr-vol { margin-left: 7px; flex: none; }
.tr-eng { margin-left: 9px; width: 24px; flex: none; }
.clock { margin-left: 10px; display: flex; flex-direction: column; align-items: center; line-height: 18px; width: 62px; flex: none; }
.tr-note { margin-left: 16px; flex: none; }
```
